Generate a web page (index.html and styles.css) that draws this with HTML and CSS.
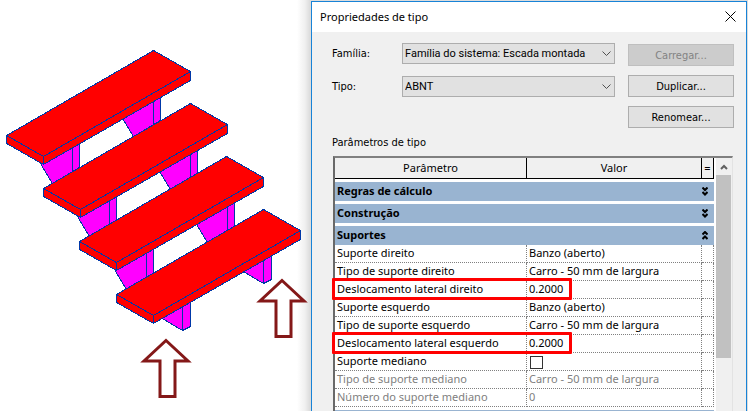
FILE: index.html
```html
<!DOCTYPE html>
<html lang="pt-BR">
<head>
  <meta charset="UTF-8" />
  <meta name="viewport" content="width=device-width, initial-scale=1.0" />
  <title>Propriedades de tipo</title>
  <link rel="stylesheet" href="styles.css">
</head>
<body>
  <main class="view">
    <svg class="model" width="311" height="411" viewBox="0 0 311 411" role="img" aria-label="Escada montada">
      <defs>
        <g id="tread">
          <path class="red" d="M6.5 135.5L153.5 50.5L190.5 71.5V80.5L43.5 164.5L6.5 143.5Z" />
          <path class="edge" d="M6.5 135.5L43.5 156.5L190.5 71.5M43.5 156.5V164.5" />
        </g>
        <g id="support">
          <path class="pink" d="M40.5 163.5L52.5 183.5L79.5 167.5V140.5Z" />
          <path class="edge" d="M72.5 145.5V171.5" />
        </g>
        <g id="foot">
          <path class="pink" d="M160.5 317.5L182.5 330.5L190.5 326.5V300.5Z" />
          <path class="edge" d="M182.5 304.5V330.5" />
        </g>
        <path id="arrow" class="arrow" d="M166 340.5L188 361H175V396.5H160V361H144Z" />
      </defs>
      <g class="stairs">
        <use href="#support" />
        <use href="#support" x="81" y="-47" />
        <use href="#tread" />
        <use href="#support" x="37" y="53" />
        <use href="#support" x="118" y="6" />
        <use href="#tread" x="37" y="53" />
        <use href="#support" x="74" y="106" />
        <use href="#support" x="155" y="59" />
        <use href="#tread" x="73" y="106" />
        <use href="#foot" />
        <use href="#foot" x="81" y="-47" />
        <use href="#tread" x="110" y="159" />
      </g>
      <use href="#arrow" />
      <use href="#arrow" x="116" y="-60" />
    </svg>

    <section class="dialog">
      <header class="title-bar">
        <h1>Propriedades de tipo</h1>
        <button class="close" type="button" aria-label="Fechar">
          <svg width="11" height="11" viewBox="0 0 11 11"><path d="M0.5 0.5L10.5 10.5M10.5 0.5L0.5 10.5" /></svg>
        </button>
      </header>

      <form class="type-form">
        <div class="fields">
          <label for="family">Família:</label>
          <div class="select">
            <select id="family">
              <option>Família do sistema: Escada montada</option>
            </select>
            <svg width="9" height="6" viewBox="0 0 9 6"><path d="M0.5 0.5L4.5 4.5L8.5 0.5" /></svg>
          </div>
          <label for="type">Tipo:</label>
          <div class="select">
            <select id="type">
              <option>ABNT</option>
            </select>
            <svg width="9" height="6" viewBox="0 0 9 6"><path d="M0.5 0.5L4.5 4.5L8.5 0.5" /></svg>
          </div>
        </div>
        <div class="actions">
          <button type="button" disabled>Carregar...</button>
          <button type="button">Duplicar...</button>
          <button type="button">Renomear...</button>
        </div>
      </form>

      <h2 id="params-title">Parâmetros de tipo</h2>
      <div class="params">
        <table aria-labelledby="params-title">
          <colgroup>
            <col class="col-name">
            <col>
            <col class="col-eq">
          </colgroup>
          <thead>
            <tr>
              <th>Parâmetro</th>
              <th>Valor</th>
              <th>=</th>
            </tr>
          </thead>
          <tbody>
            <tr class="group">
              <td colspan="3"><button type="button">Regras de cálculo
                <svg width="6" height="9" viewBox="0 0 6 9"><path d="M0.5 0.5L3 3L5.5 0.5M0.5 5L3 7.5L5.5 5" /></svg></button></td>
            </tr>
            <tr class="group">
              <td colspan="3"><button type="button">Construção
                <svg width="6" height="9" viewBox="0 0 6 9"><path d="M0.5 0.5L3 3L5.5 0.5M0.5 5L3 7.5L5.5 5" /></svg></button></td>
            </tr>
            <tr class="group">
              <td colspan="3"><button type="button">Suportes
                <svg width="6" height="9" viewBox="0 0 6 9"><path d="M0.5 3.5L3 1L5.5 3.5M0.5 8L3 5.5L5.5 8" /></svg></button></td>
            </tr>
            <tr><td>Suporte direito</td><td>Banzo (aberto)</td><td></td></tr>
            <tr><td>Tipo de suporte direito</td><td>Carro - 50 mm de largura</td><td></td></tr>
            <tr class="marked"><td>Deslocamento lateral direito</td><td>0.2000</td><td></td></tr>
            <tr><td>Suporte esquerdo</td><td>Banzo (aberto)</td><td></td></tr>
            <tr><td>Tipo de suporte esquerdo</td><td>Carro - 50 mm de largura</td><td></td></tr>
            <tr class="marked"><td>Deslocamento lateral esquerdo</td><td>0.2000</td><td></td></tr>
            <tr><td><label for="middle">Suporte mediano</label></td><td><input type="checkbox" id="middle"></td><td></td></tr>
            <tr class="off"><td>Tipo de suporte mediano</td><td>Carro - 50 mm de largura</td><td></td></tr>
            <tr class="off"><td>Número do suporte mediano</td><td>0</td><td></td></tr>
            <tr class="group"><td colspan="3"><button type="button" aria-label="Próximo grupo"></button></td></tr>
          </tbody>
        </table>
        <div class="scrollbar">
          <button type="button" aria-label="Rolar para cima">
            <svg width="8" height="6" viewBox="0 0 8 6"><path d="M1 5L4 2L7 5" /></svg>
          </button>
          <div class="thumb"></div>
        </div>
      </div>
    </section>
  </main>
</body>
</html>
```

FILE: styles.css
```css
*, *::after {
  box-sizing: border-box;
}

body {
  margin: 0;
  background: #fff;
  color: #000;
  font-family: "Noto Sans", sans-serif;
  font-size: 11px;
}

button, select {
  font: inherit;
  color: inherit;
  border-radius: 0;
}

svg {
  fill: none;
  stroke: #000;
}

.view {
  display: flex;
  height: 100vh;
  overflow: hidden;
}

/* 3D view */
.model {
  flex: none;
  background: linear-gradient(to right, #fff 297px, #f0f0f0 305px, #d8d8d8 311px);
}

.stairs {
  shape-rendering: crispEdges;
  stroke: #0038a8;
}

.red {
  fill: #f00;
}

.pink {
  fill: #f0f;
}

.arrow {
  fill: none;
  stroke: #841818;
  stroke-width: 3;
}

/* Dialog */
.dialog {
  flex: 1;
  display: flex;
  flex-direction: column;
  min-width: 0;
  margin: 1px 1px 0 0;
  border: 1px solid #1883d7;
  border-bottom: 0;
  background: #f0f0f0;
  box-shadow: 0 0 0 1px #dcdcdc;
}

.title-bar {
  flex: none;
  display: flex;
  align-items: center;
  justify-content: space-between;
  height: 30px;
  padding: 0 10px 2px 8px;
  background: #fff;
}

h1, h2 {
  margin: 0;
  font-size: 11px;
  font-weight: normal;
}

.close {
  display: flex;
  padding: 0;
  border: 0;
  background: none;
}

.type-form {
  display: flex;
  gap: 13px;
  padding: 11px 12px 0 20px;
}

.type-form, h2 {
  font-family: "DejaVu Sans Condensed", "DejaVu Sans", sans-serif;
}

.fields {
  flex: 1;
  display: grid;
  grid-template-columns: 70px 1fr;
  grid-auto-rows: 21px;
  row-gap: 12px;
  align-items: center;
}

.select {
  position: relative;
}

.select select {
  display: block;
  width: 100%;
  height: 21px;
  padding: 0 20px 0 2px;
  border: 1px solid #adadad;
  background: #e1e1e1;
  font-family: Roboto, sans-serif;
  appearance: none;
}

.select svg {
  position: absolute;
  top: 8px;
  right: 4px;
  stroke: #505050;
  pointer-events: none;
}

.actions {
  display: flex;
  flex-direction: column;
  gap: 9px;
  width: 106px;
  padding-top: 1px;
}

.actions button {
  height: 22px;
  padding: 0;
  border: 1px solid #adadad;
  background: #e1e1e1;
}

.actions button:disabled {
  border-color: #bfbfbf;
  background: #ccc;
  color: #838383;
}

h2 {
  padding: 7px 20px 5px;
  line-height: 16px;
}

.params {
  flex: 1;
  display: flex;
  gap: 2px;
  min-height: 0;
  margin: 0 13px 0 21px;
  border: 2px solid #696969;
  border-top-color: #808080;
  border-right: 1px solid #e3e3e3;
  border-bottom: 0;
  background: #fff;
}

table {
  flex: 1;
  align-self: flex-start;
  table-layout: fixed;
  border-collapse: separate;
  border-spacing: 0;
}

.col-name {
  width: 192px;
}

.col-eq {
  width: 12px;
}

th {
  height: 21px;
  padding: 0;
  border-right: 1px solid #000;
  border-bottom: 1px solid #000;
  background: #f0f0f0;
  font-weight: normal;
  line-height: 18px;
}

td {
  position: relative;
  height: 18px;
  padding: 0 2px;
  border-right: 1px dotted #808080;
  border-bottom: 1px dotted #808080;
  line-height: 16px;
  vertical-align: top;
  white-space: nowrap;
}

.group td {
  height: 22px;
  padding: 3px 0 0;
  border: 0;
}

.group button {
  display: flex;
  align-items: center;
  justify-content: space-between;
  width: 100%;
  height: 19px;
  padding: 0 6px 1px 2px;
  border: 0;
  background: #99b4d1;
  font-weight: bold;
}

.group svg {
  stroke-width: 2;
}

.off {
  color: #808080;
}

.marked td:first-child::after {
  content: "";
  position: absolute;
  z-index: 1;
  top: -3px;
  left: -3px;
  width: calc(100% + 49px);
  height: 22px;
  border: 3px solid #f00;
  border-radius: 1px;
}

input[type="checkbox"] {
  display: block;
  width: 13px;
  height: 13px;
  margin: 3px 1px 1px;
  border: 1px solid #333;
  background: #fff;
  appearance: none;
}

.scrollbar {
  width: 16px;
  background: #f0f0f0;
}

.scrollbar button {
  display: flex;
  align-items: center;
  justify-content: center;
  width: 15px;
  height: 17px;
  padding: 0;
  border: 0;
  background: none;
}

.scrollbar svg {
  stroke: #606060;
  stroke-width: 2;
}

.thumb {
  width: 15px;
  height: 183px;
  background: #c1c1c1;
}
```
